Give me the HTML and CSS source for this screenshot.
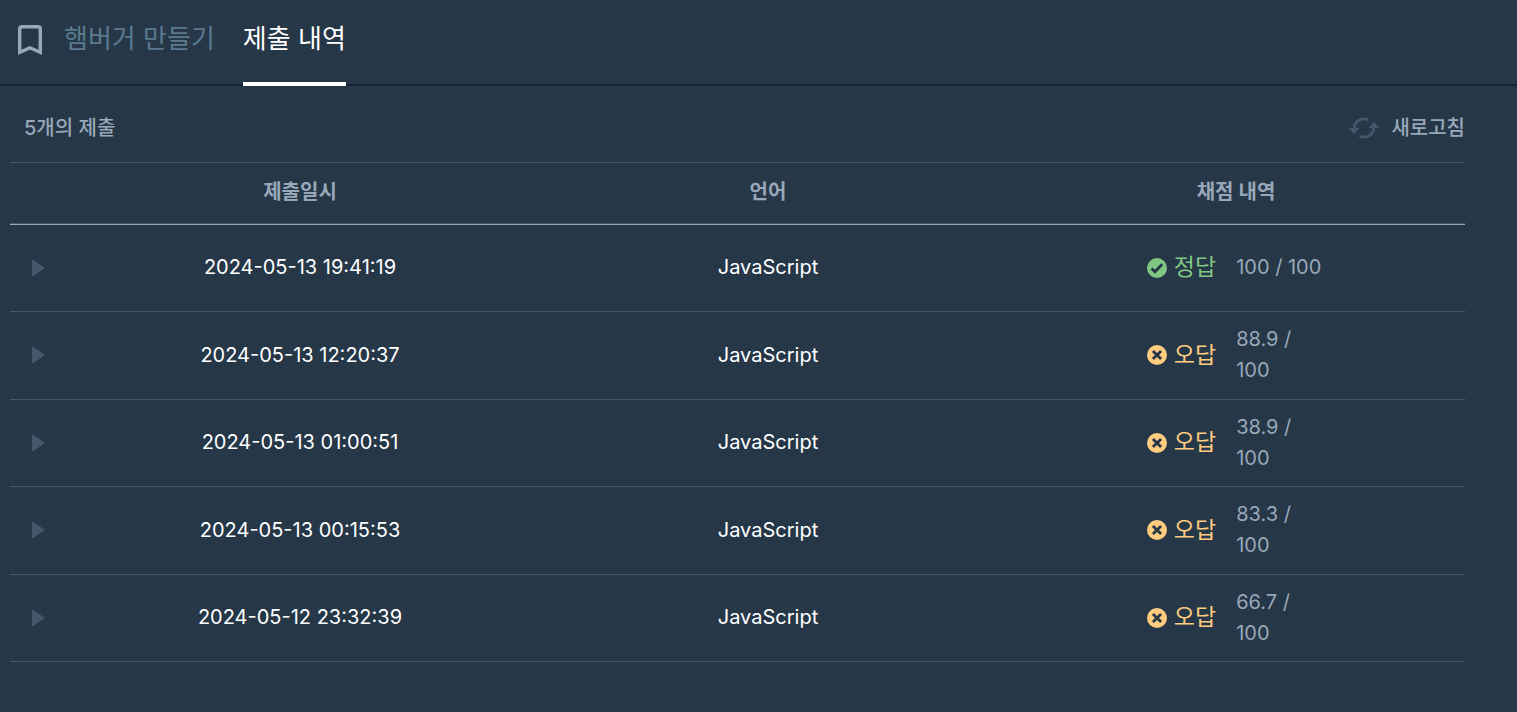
FILE: index.html
```html
<!DOCTYPE html>
<html lang="ko">
<head>
<meta charset="utf-8">
<meta name="viewport" content="width=device-width, initial-scale=1">
<title>제출 내역</title>
<link rel="stylesheet" href="styles.css">
</head>
<body>
<svg class="defs" aria-hidden="true">
  <symbol id="arrow" viewBox="0 0 14 16"><path d="M0 0h1.5L13 8 1.500 16H0z"/></symbol>
  <symbol id="pass" viewBox="0 0 20 20"><circle cx="10" cy="10" r="10"/><path class="mark" d="M4.600 10.400l3.400 3.400L15.200 6.200"/></symbol>
  <symbol id="fail" viewBox="0 0 20 20"><circle cx="10" cy="10" r="10"/><path class="mark" d="M5.900 5.900l8.200 8.200M14.100 5.900l-8.200 8.200"/></symbol>
</svg>
<header class="topbar">
  <button class="bookmark" type="button" aria-label="북마크">
    <svg width="24" height="30" viewBox="0 0 24 30"><path d="M1.7 27.3V4q0-2.3 2.3-2.3h16q2.3 0 2.3 2.3v23.3L12 22.8z"/></svg>
  </button>
  <nav class="tabs">
    <a class="tab" href="#problem">햄버거 만들기</a>
    <a class="tab active" href="#submissions" aria-current="page">제출 내역</a>
  </nav>
</header>
<main class="content">
  <div class="toolbar">
    <span>5개의 제출</span>
    <button class="refresh" type="button">
      <svg width="30" height="24" viewBox="0 0 30 24"><path class="arc" d="M5.3 13C4.7 6 11.500 0.800 19.500 3.700M24.700 11C25.300 18 18.500 23.200 10.500 20.300"/><path class="head" d="M0 12h10.200l-5.100 6zM30 12H19.800l5.100-6z"/></svg>
      <span>새로고침</span>
    </button>
  </div>
  <table class="submissions">
    <thead>
      <tr><th class="toggle-col"></th><th class="date-col" scope="col">제출일시</th><th class="lang-col" scope="col">언어</th><th class="result-col" scope="col">채점 내역</th></tr>
    </thead>
    <tbody>
      <tr>
        <td class="toggle-col"><button class="toggle" type="button" aria-label="펼치기"><svg><use href="#arrow"/></svg></button></td>
        <td>2024-05-13 19:41:19</td><td>JavaScript</td>
        <td class="result-col"><div class="result pass"><svg class="status"><use href="#pass"/></svg><span class="verdict">정답</span><span class="score">100 / 100</span></div></td>
      </tr>
      <tr>
        <td class="toggle-col"><button class="toggle" type="button" aria-label="펼치기"><svg><use href="#arrow"/></svg></button></td>
        <td>2024-05-13 12:20:37</td><td>JavaScript</td>
        <td class="result-col"><div class="result fail"><svg class="status"><use href="#fail"/></svg><span class="verdict">오답</span><span class="score">88.9 / 100</span></div></td>
      </tr>
      <tr>
        <td class="toggle-col"><button class="toggle" type="button" aria-label="펼치기"><svg><use href="#arrow"/></svg></button></td>
        <td>2024-05-13 01:00:51</td><td>JavaScript</td>
        <td class="result-col"><div class="result fail"><svg class="status"><use href="#fail"/></svg><span class="verdict">오답</span><span class="score">38.9 / 100</span></div></td>
      </tr>
      <tr>
        <td class="toggle-col"><button class="toggle" type="button" aria-label="펼치기"><svg><use href="#arrow"/></svg></button></td>
        <td>2024-05-13 00:15:53</td><td>JavaScript</td>
        <td class="result-col"><div class="result fail"><svg class="status"><use href="#fail"/></svg><span class="verdict">오답</span><span class="score">83.3 / 100</span></div></td>
      </tr>
      <tr>
        <td class="toggle-col"><button class="toggle" type="button" aria-label="펼치기"><svg><use href="#arrow"/></svg></button></td>
        <td>2024-05-12 23:32:39</td><td>JavaScript</td>
        <td class="result-col"><div class="result fail"><svg class="status"><use href="#fail"/></svg><span class="verdict">오답</span><span class="score">66.7 / 100</span></div></td>
      </tr>
    </tbody>
  </table>
</main>
</body>
</html>
```
FILE: styles.css
```css
* { box-sizing: border-box; }
body {
  margin: 0;
  background: #263747;
  color: #98a8b9;
  font: 20px/31px Inter, "Noto Sans CJK KR", sans-serif;
}
button { padding: 0; border: 0; background: none; color: inherit; font: inherit; cursor: pointer; }
svg { display: block; flex: none; }
.defs { width: 0; height: 0; position: absolute; }

.topbar {
  display: flex;
  align-items: stretch;
  gap: 22px;
  height: 86px;
  padding-left: 18px;
  border-bottom: 2px solid #172334;
}
.bookmark { align-self: flex-start; margin-top: 25px; }
.bookmark path { fill: none; stroke: #98a8b9; stroke-width: 3.4; }
.tabs { display: flex; gap: 28px; margin-bottom: -2px; }
.tab {
  padding-top: 19px;
  border-bottom: 4px solid transparent;
  color: #5a7a90;
  font-size: 26px;
  line-height: 40px;
  text-decoration: none;
}
.tab.active { color: #fff; border-bottom-color: #fff; }

.content { padding: 0 52px 50px 10px; }
.toolbar {
  display: flex;
  align-items: center;
  justify-content: space-between;
  height: 76px;
  padding: 8px 0 0 14px;
  font-weight: 500;
}
.refresh { display: flex; align-items: center; gap: 12px; }
.refresh .arc { fill: none; stroke: #44576c; stroke-width: 2.6; }
.refresh .head { fill: #44576c; }

.submissions {
  width: 100%;
  table-layout: fixed;
  border-collapse: separate;
  border-spacing: 0;
  text-align: center;
}
.submissions th {
  height: 63px;
  padding: 0 0 2px;
  border-top: 1px solid #44576c;
  border-bottom: 1px solid #98a8b9;
  box-shadow: inset 0 -1px #44576c;
  font-weight: 600;
}
.submissions td {
  height: 87px;
  padding: 0 0 1px;
  border-bottom: 1px solid #44576c;
  color: #fff;
}
.submissions tbody tr:nth-child(even) td { height: 88px; }
.submissions .toggle-col { width: 56px; }
.submissions .date-col, .submissions .lang-col { width: 468px; }
.submissions .result-col { padding-left: 5px; }
.toggle { display: block; margin-left: 22px; }
.toggle svg { width: 14px; height: 16px; fill: #44576c; }

.result { display: flex; align-items: center; justify-content: center; }
.status { width: 20px; height: 20px; margin-right: 7px; fill: currentColor; }
.mark { fill: none; stroke: #263747; stroke-width: 2.8; }
.verdict { margin-right: 20px; font-size: 23px; }
.score { width: 89px; color: #98a8b9; text-align: left; }
.pass { color: #81c784; }
.fail { color: #ffcc80; }
```
